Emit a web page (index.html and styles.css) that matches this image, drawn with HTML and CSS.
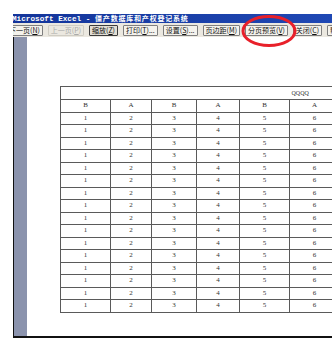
FILE: index.html
```html
<!DOCTYPE html>
<html lang="zh-CN">
<head>
    <meta charset="UTF-8">
    <meta name="viewport" content="width=device-width, initial-scale=1.0">
    <title>Microsoft Excel - 打印预览</title>
    <link rel="stylesheet" href="styles.css">
</head>
<body>
    <div class="window">
        <div class="titlebar">Microsoft Excel - <span class="cjk">僵产数据库和产权登记系统</span></div>

        <div class="toolbar">
            <span class="btn first">下一页(<u>N</u>)</span>
            <span class="btn disabled">上一页(<u>P</u>)</span>
            <span class="btn pressed">缩放(<u>Z</u>)</span>
            <span class="btn">打印(<u>T</u>)...</span>
            <span class="btn">设置(<u>S</u>)...</span>
            <span class="btn">页边距(<u>M</u>)</span>
            <span class="btn">分页预览(<u>V</u>)</span>
            <span class="btn">关闭(<u>C</u>)</span>
            <span class="btn">帮助(<u>H</u>)</span>
        </div>

        <!-- red mark drawn over the toolbar -->
        <svg class="mark" width="60" height="36" viewBox="0 0 60 36">
            <ellipse cx="30" cy="18" rx="26" ry="14.5" fill="none" stroke="#e8202a" stroke-width="3"/>
        </svg>

        <div class="workspace">
            <div class="strip"></div>
            <div class="page">
                <div class="sheet-wrap">
                    <table class="sheet">
                        <colgroup>
                            <col class="c1">
                            <col class="c2">
                            <col class="c3">
                            <col class="c4">
                            <col class="c5">
                            <col class="c6">
                            <col class="c7">
                        </colgroup>
                        <tr class="caption">
                            <td colspan="5"></td>
                            <td class="qq">QQQQ</td>
                            <td></td>
                        </tr>
                        <tr>
                            <td>B</td><td>A</td><td>B</td><td>A</td><td>B</td><td>A</td><td></td>
                        </tr>
                        <tr><td>1</td><td>2</td><td>3</td><td>4</td><td>5</td><td>6</td><td></td></tr>
                        <tr><td>1</td><td>2</td><td>3</td><td>4</td><td>5</td><td>6</td><td></td></tr>
                        <tr><td>1</td><td>2</td><td>3</td><td>4</td><td>5</td><td>6</td><td></td></tr>
                        <tr><td>1</td><td>2</td><td>3</td><td>4</td><td>5</td><td>6</td><td></td></tr>
                        <tr><td>1</td><td>2</td><td>3</td><td>4</td><td>5</td><td>6</td><td></td></tr>
                        <tr><td>1</td><td>2</td><td>3</td><td>4</td><td>5</td><td>6</td><td></td></tr>
                        <tr><td>1</td><td>2</td><td>3</td><td>4</td><td>5</td><td>6</td><td></td></tr>
                        <tr><td>1</td><td>2</td><td>3</td><td>4</td><td>5</td><td>6</td><td></td></tr>
                        <tr><td>1</td><td>2</td><td>3</td><td>4</td><td>5</td><td>6</td><td></td></tr>
                        <tr><td>1</td><td>2</td><td>3</td><td>4</td><td>5</td><td>6</td><td></td></tr>
                        <tr><td>1</td><td>2</td><td>3</td><td>4</td><td>5</td><td>6</td><td></td></tr>
                        <tr><td>1</td><td>2</td><td>3</td><td>4</td><td>5</td><td>6</td><td></td></tr>
                        <tr><td>1</td><td>2</td><td>3</td><td>4</td><td>5</td><td>6</td><td></td></tr>
                        <tr><td>1</td><td>2</td><td>3</td><td>4</td><td>5</td><td>6</td><td></td></tr>
                        <tr><td>1</td><td>2</td><td>3</td><td>4</td><td>5</td><td>6</td><td></td></tr>
                        <tr><td>1</td><td>2</td><td>3</td><td>4</td><td>5</td><td>6</td><td></td></tr>
                    </table>
                </div>
            </div>
        </div>
    </div>
</body>
</html>
```

FILE: styles.css
```css
* {
    margin: 0;
    padding: 0;
    box-sizing: border-box;
}

body {
    background: #fff;
    font-family: "Noto Sans CJK SC", "DejaVu Sans", sans-serif;
    width: 332px;
    height: 363px;
    overflow: hidden;
}

.window {
    position: relative;
    width: 319px;
    margin: 14px 0 0 13px;
    overflow: hidden;
}

.titlebar {
    height: 9px;
    background: linear-gradient(90deg, #14359a 0%, #1f48b4 100%);
    color: #fff;
    font-family: "Liberation Mono", monospace;
    font-weight: bold;
    font-size: 7.7px;
    line-height: 9px;
    white-space: nowrap;
    overflow: hidden;
    text-indent: -1px;
}

.titlebar .cjk {
    font-family: "Noto Sans CJK SC", sans-serif;
    font-size: 7px;
    letter-spacing: 0.8px;
}

.toolbar {
    height: 14px;
    background: #ebe8e0;
    display: flex;
    align-items: center;
    gap: 5px;
    white-space: nowrap;
    overflow: hidden;
}

.btn {
    flex: none;
    height: 11px;
    padding: 0 2px;
    border: 1px solid #7f7f7f;
    border-radius: 1px;
    background: #f4f2ec;
    font-size: 7px;
    line-height: 9px;
    color: #111;
}

.btn u {
    text-decoration: underline;
}

.btn.first {
    margin-left: -7px;
}

.btn.disabled {
    color: #aaa;
    border-color: #d0cdc4;
    background: transparent;
}

.btn.pressed {
    border-color: #3c3c3c;
    background: #e2ded4;
}

.mark {
    position: absolute;
    left: 226px;
    top: -1px;
}

.workspace {
    height: 301px;
    border-left: 1px solid #111;
    border-bottom: 2px solid #111;
    display: flex;
}

.strip {
    flex: none;
    width: 13px;
    background: #8b93ad;
}

.page {
    flex: 1;
    min-width: 0;
    background: #fff;
    padding: 49px 0 0 33px;
    overflow: hidden;
}

.sheet-wrap {
    width: 400px;
}

.sheet {
    border-collapse: collapse;
    table-layout: fixed;
    width: 329px;
    font-family: "Liberation Serif", "DejaVu Serif", serif;
    font-size: 7px;
    color: #333;
}

.sheet .c1 { width: 50px; }
.sheet .c2 { width: 41px; }
.sheet .c3 { width: 45px; }
.sheet .c4 { width: 43px; }
.sheet .c5 { width: 50px; }
.sheet .c6 { width: 50px; }
.sheet .c7 { width: 50px; }

.sheet td {
    height: 12.5px;
    border: 1px solid #5a5a5a;
    text-align: center;
    vertical-align: middle;
    line-height: 9px;
    padding: 0;
}

.sheet .caption td {
    height: 13px;
    border-left: 0;
    border-right: 0;
}

.sheet .caption td:first-child {
    border-left: 1px solid #5a5a5a;
}

.sheet .caption td.qq {
    text-align: left;
    padding-left: 2px;
    font-size: 6px;
}
```
